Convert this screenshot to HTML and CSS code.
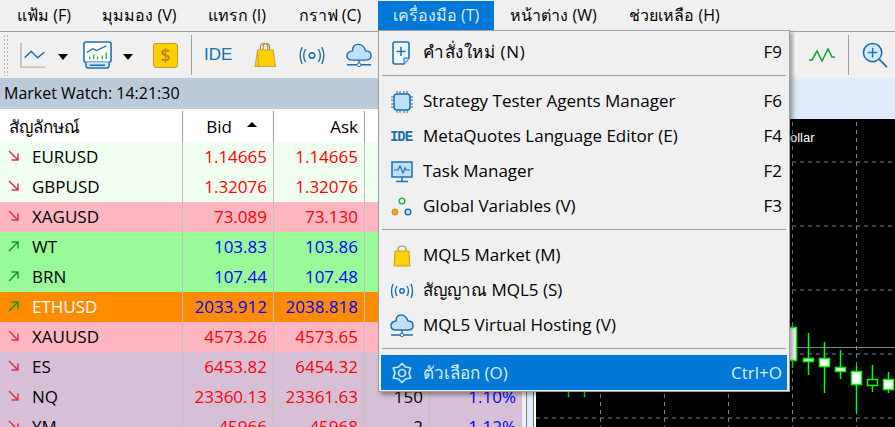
FILE: index.html
```html
<!DOCTYPE html>
<html lang="th">
<head>
<meta charset="utf-8">
<title>MetaTrader</title>
<link rel="stylesheet" href="styles.css">
</head>
<body>
<div class="app">
  <nav class="menubar">
    <span class="mi m1">แฟ้ม (F)</span>
    <span class="mi m2">มุมมอง (V)</span>
    <span class="mi m3">แทรก (I)</span>
    <span class="mi m4">กราฟ (C)</span>
    <span class="mi m5 open">เครื่องมือ (T)</span>
    <span class="mi m6">หน้าต่าง (W)</span>
    <span class="mi m7">ช่วยเหลือ (H)</span>
  </nav>
  <div class="toolbar">
    <div class="grip"></div>
    <svg class="ic i-line" width="26" height="26" viewBox="0 0 28 28"><path d="M1 1V27H27" fill="none" stroke="#b4b4b4" stroke-width="1.5"/><path d="M5 17L12 10L19 17L26 11" fill="none" stroke="#1c6fb3" stroke-width="1.6"/></svg>
    <span class="caret c1"></span>
    <svg class="ic i-chart" width="29" height="29" viewBox="0 0 30 30"><rect x="1" y="1" width="28" height="21" rx="2" fill="#fff" stroke="#1c6fb3" stroke-width="1.6"/><path d="M4 12L10 8L14 10L24 5" fill="none" stroke="#1c6fb3" stroke-width="1.3"/><path d="M7 19V16M11 19V14M15 19V16M20 19V15M24 19V12" stroke="#35b44a" stroke-width="1.5"/><path d="M3 22V25Q3 28 6 28H24Q27 28 27 25V22M7 25H23" fill="#d6e9f8" stroke="#1c6fb3" stroke-width="1.5"/></svg>
    <span class="caret c2"></span>
    <div class="dollar">$</div>
    <span class="vsep s1"></span>
    <span class="ide">IDE</span>
    <svg class="ic i-bag" width="22" height="26" viewBox="0 0 24 27"><path d="M7 9V5Q7 1 10.500 1H12Q15 1 15 5V9M10 9V5Q10 1 13.500 1Q17 1 17 5V9" fill="none" stroke="#b8892f" stroke-width="1.2"/><path d="M4 8H21L23.500 26H1Z" fill="#ffd000" stroke="#c89a38"/><path d="M4 8L5 26" stroke="#c89a38"/></svg>
    <svg class="ic i-sig" width="26" height="19" viewBox="0 0 28 20"><circle cx="14" cy="10" r="3" fill="none" stroke="#1c6fb3" stroke-width="1.6"/><path d="M7 3Q3 10 7 17M21 3Q25 10 21 17M3.500 1Q-1 10 3.500 19M24.500 1Q29 10 24.500 19" fill="none" stroke="#1c6fb3" stroke-width="1.5"/></svg>
    <svg class="ic i-cloud" width="26" height="25" viewBox="0 0 28 26"><path d="M7 18H21Q27 18 27 13Q27 8 21 8Q19 1 13 1Q7 1 7 8Q1 9 1 13Q1 18 7 18Z" fill="#bfe0fb" stroke="#1c6fb3" stroke-width="1.5"/><path d="M1 23H27M14 18V23" stroke="#1c6fb3" stroke-width="1.5"/><circle cx="14" cy="23" r="2" fill="#fff" stroke="#1c6fb3"/></svg>
    <div class="tb-right">
      <div class="pressed"></div>
      <svg class="ic i-wave" width="26" height="14" viewBox="0 0 26 14"><path d="M0 12H3L8 3L13 13L19 1L23 9H26" fill="none" stroke="#1aa83c" stroke-width="1.6"/></svg>
      <span class="vsep s2"></span>
      <svg class="ic i-zoom" width="26" height="26" viewBox="0 0 27 27"><circle cx="11" cy="11" r="9.500" fill="#d6ebfb" stroke="#1c6fb3" stroke-width="1.6"/><path d="M11 6V16M6 11H16" stroke="#1c6fb3" stroke-width="1.5"/><path d="M18 18L26 26" stroke="#1c6fb3" stroke-width="1.8"/></svg>
    </div>
  </div>
  <div class="workspace">
    <section class="watch">
      <div class="watch-title">Market Watch: 14:21:30</div>
      <div class="thead">
        <div class="th sym">สัญลักษณ์</div>
        <div class="th num bid">Bid <span class="sort"></span></div>
        <div class="th num">Ask</div>
        <div class="th"></div>
        <div class="th"></div>
      </div>
      <div class="row honey"><svg class="ar dn" viewBox="0 0 12 12"><path d="M1 1L10 10M10 3.500V10H3.500"/></svg><div class="c sym">EURUSD</div><div class="c num red">1.14665</div><div class="c num red">1.14665</div><div class="c num"></div><div class="c num"></div></div>
      <div class="row honey"><svg class="ar dn" viewBox="0 0 12 12"><path d="M1 1L10 10M10 3.500V10H3.500"/></svg><div class="c sym">GBPUSD</div><div class="c num red">1.32076</div><div class="c num red">1.32076</div><div class="c num"></div><div class="c num"></div></div>
      <div class="row pink"><svg class="ar dn" viewBox="0 0 12 12"><path d="M1 1L10 10M10 3.500V10H3.500"/></svg><div class="c sym">XAGUSD</div><div class="c num red">73.089</div><div class="c num red">73.130</div><div class="c num"></div><div class="c num"></div></div>
      <div class="row pale"><svg class="ar up" viewBox="0 0 12 12"><path d="M1 11L10 2M3.500 2H10V8.500"/></svg><div class="c sym">WT</div><div class="c num blue">103.83</div><div class="c num blue">103.86</div><div class="c num"></div><div class="c num"></div></div>
      <div class="row pale"><svg class="ar up" viewBox="0 0 12 12"><path d="M1 11L10 2M3.500 2H10V8.500"/></svg><div class="c sym">BRN</div><div class="c num blue">107.44</div><div class="c num blue">107.48</div><div class="c num"></div><div class="c num"></div></div>
      <div class="row orange"><svg class="ar up" viewBox="0 0 12 12"><path d="M1 11L10 2M3.500 2H10V8.500"/></svg><div class="c sym">ETHUSD</div><div class="c num blue">2033.912</div><div class="c num blue">2038.818</div><div class="c num"></div><div class="c num"></div></div>
      <div class="row pink"><svg class="ar dn" viewBox="0 0 12 12"><path d="M1 1L10 10M10 3.500V10H3.500"/></svg><div class="c sym">XAUUSD</div><div class="c num red">4573.26</div><div class="c num red">4573.65</div><div class="c num"></div><div class="c num"></div></div>
      <div class="row thistle"><svg class="ar dn" viewBox="0 0 12 12"><path d="M1 1L10 10M10 3.500V10H3.500"/></svg><div class="c sym">ES</div><div class="c num red">6453.82</div><div class="c num red">6454.32</div><div class="c num"></div><div class="c num"></div></div>
      <div class="row thistle"><svg class="ar dn" viewBox="0 0 12 12"><path d="M1 1L10 10M10 3.500V10H3.500"/></svg><div class="c sym">NQ</div><div class="c num red">23360.13</div><div class="c num red">23361.63</div><div class="c num">150</div><div class="c num blue">1.10%</div></div>
      <div class="row thistle"><svg class="ar dn" viewBox="0 0 12 12"><path d="M1 1L10 10M10 3.500V10H3.500"/></svg><div class="c sym">YM</div><div class="c num red">45966</div><div class="c num red">45968</div><div class="c num">2</div><div class="c num blue">1.12%</div></div>
    </section>
    <section class="chartpane">
      <div class="chartwrap">
        <div class="chartframe">
          <div class="chart">
            <span class="chart-title">ollar</span>
            <svg class="plot" width="359" height="308" viewBox="536 119 359 308">
              <g class="grid">
                <path d="M536 162H895M536 226H895M536 290H895M536 354H895M536 418H895M600.500 122V427M664.500 122V427M728.500 122V427M792.500 122V427M856.500 122V427"/>
              </g>
              <path d="M536 347.500H895" stroke="#778899"/>
              <g class="cdl">
                <path d="M792.500 324V368M808.500 333V375M824.500 342V393M840.500 350V379M856.500 366V413M872.500 365V392M888.500 372V393M568.500 392V397M584.500 392V397"/>
                <rect x="781.500" y="327.500" width="15" height="33" fill="#fff"/>
                <rect x="803.500" y="358.500" width="10" height="3" fill="#fff"/>
                <rect x="819.500" y="358.500" width="10" height="8" fill="#fff"/>
                <rect x="835.500" y="367.500" width="10" height="4" fill="#fff"/>
                <rect x="851.500" y="371.500" width="10" height="13" fill="#fff"/>
                <rect x="867.500" y="379.500" width="10" height="6" fill="#000"/>
                <rect x="883.500" y="379.500" width="10" height="10" fill="#fff"/>
              </g>
            </svg>
          </div>
        </div>
      </div>
    </section>
  </div>

  <div class="menu">
    <div class="item"><svg class="mic" width="20" height="24" viewBox="0 0 20 24"><path d="M3 1H15Q17 1 17 3V17L12 23H3Q1 23 1 21V3Q1 1 3 1Z" fill="#eef6fc" stroke="#1c6fb3" stroke-width="1.6"/><path d="M12 23V17H17" fill="#bfe0fb" stroke="#1c6fb3"/><path d="M9 6V15M4.500 10.500H13.500" stroke="#1c6fb3" stroke-width="1.5"/></svg><span class="lbl wide">คำสั่งใหม่ (N)</span><span class="key">F9</span></div>
    <div class="sep"></div>
    <div class="item"><svg class="mic" width="24" height="24" viewBox="0 0 24 24"><rect x="4" y="4" width="16" height="16" rx="3" fill="#bfe0fb" stroke="#1c6fb3" stroke-width="1.5"/><path d="M7 1V4M10 1V4M14 1V4M17 1V4M7 20V23M10 20V23M14 20V23M17 20V23M1 7H4M1 10H4M1 14H4M1 17H4M20 7H23M20 10H23M20 14H23M20 17H23" stroke="#1c6fb3"/></svg><span class="lbl">Strategy Tester Agents Manager</span><span class="key">F6</span></div>
    <div class="item"><span class="mide">IDE</span><span class="lbl">MetaQuotes Language Editor (E)</span><span class="key">F4</span></div>
    <div class="item"><svg class="mic" width="22" height="22" viewBox="0 0 22 22"><rect x="1" y="1" width="20" height="15" fill="#bfe0fb" stroke="#1c6fb3" stroke-width="1.5"/><path d="M3 9H7L9 5L12 12L14 7L15 9H19" fill="none" stroke="#1c6fb3" stroke-width="1.2"/><path d="M11 16V20M5 20.500H17" stroke="#1c6fb3" stroke-width="1.5"/></svg><span class="lbl">Task Manager</span><span class="key">F2</span></div>
    <div class="item"><svg class="mic" width="22" height="20" viewBox="0 0 22 20"><circle cx="11" cy="4" r="2.800" fill="#fff" stroke="#22b14c" stroke-width="1.5"/><circle cx="4" cy="15" r="3" fill="#f0a818" stroke="#c88a10"/><circle cx="17" cy="15" r="2.800" fill="#d6ebfb" stroke="#1c6fb3" stroke-width="1.5"/></svg><span class="lbl">Global Variables (V)</span><span class="key">F3</span></div>
    <div class="sep"></div>
    <div class="item"><svg class="mic" width="18" height="22" viewBox="0 0 18 22"><path d="M5 7V4Q5 1 9 1Q13 1 13 4V7" fill="none" stroke="#b8892f" stroke-width="1.2"/><path d="M2 6H16L17 21H1Z" fill="#ffd000" stroke="#c89a38"/></svg><span class="lbl">MQL5 Market (M)</span><span class="key"></span></div>
    <div class="item"><svg class="mic" width="24" height="16" viewBox="0 0 24 16"><circle cx="12" cy="8" r="2.200" fill="none" stroke="#1c6fb3" stroke-width="1.500"/><path d="M7 3Q4 8 7 13M17 3Q20 8 17 13M3 1Q0 8 3 15M21 1Q24 8 21 15" fill="none" stroke="#1c6fb3" stroke-width="1.400"/></svg><span class="lbl">สัญญาณ MQL5 (S)</span><span class="key"></span></div>
    <div class="item"><svg class="mic" width="24" height="24" viewBox="0 0 24 24"><path d="M6 16H18Q23 16 23 11.500Q23 7 18 7Q16 1 11 1Q6 1 6 7Q1 8 1 11.500Q1 16 6 16Z" fill="#bfe0fb" stroke="#1c6fb3" stroke-width="1.500"/><path d="M1 21H23M12 16V21" stroke="#1c6fb3" stroke-width="1.500"/><circle cx="12" cy="21" r="1.800" fill="#fff" stroke="#1c6fb3"/></svg><span class="lbl">MQL5 Virtual Hosting (V)</span><span class="key"></span></div>
    <div class="sep short"></div>
    <div class="item sel"><svg class="mic" width="22" height="22" viewBox="0 0 22 22"><path d="M11 1.500L14.500 5L19.700 6L18 11L19.700 16L14.500 17L11 20.500L7.500 17L2.300 16L4 11L2.300 6L7.500 5Z" fill="none" stroke="#cfe6f8" stroke-width="1.700" stroke-linejoin="round"/><circle cx="11" cy="11" r="3.500" fill="none" stroke="#cfe6f8" stroke-width="1.700"/></svg><span class="lbl">ตัวเลือก (O)</span><span class="key">Ctrl+O</span></div>
  </div>
</div>
</body>
</html>
```

FILE: styles.css
```css
* { box-sizing: border-box; }
html, body { margin: 0; padding: 0; }
body {
  width: 895px;
  height: 427px;
  overflow: hidden;
  background: #f0f0f0;
  font-family: "Open Sans", "Noto Sans", "Noto Sans CJK SC", "DejaVu Sans", sans-serif;
  font-size: 17px;
  color: #000;
}
.app { position: relative; width: 895px; height: 427px; overflow: hidden; }

.menubar {
  display: flex;
  height: 32px;
  padding: 1px 0 0 1px;
  background: #f0f0f0;
  border-bottom: 1px solid #a0a0a0;
  font-size: 16px;
}
.mi { display: flex; align-items: center; height: 29px; justify-content: center; white-space: nowrap; flex: none; }
.m1 { width: 86px; }
.m2 { width: 105px; }
.m3 { width: 90px; }
.m4 { width: 96px; }
.m5 { width: 116px; }
.m6 { width: 119px; }
.m7 { width: 123px; }
.mi.open { background: #0078d7; color: #dbeefb; }

.toolbar {
  display: flex;
  align-items: center;
  height: 46px;
  background: #f0f0f0;
  padding-left: 3px;
}
.grip {
  width: 5px;
  height: 42px;
  background-image: radial-gradient(#b0b0b0 1px, transparent 1px);
  background-size: 3px 4px;
}
.ic { flex: none; display: block; }
.i-line { margin-left: 12px; }
.caret { width: 0; height: 0; border-left: 5.500px solid transparent; border-right: 5.500px solid transparent; border-top: 6px solid #000; margin-top: 4px; flex: none; }
.c1 { margin-left: 12px; }
.i-chart { margin-left: 15px; }
.c2 { margin-left: 11px; }
.dollar {
  margin-left: 20px;
  width: 25px;
  height: 25px;
  flex: none;
  background: #ffd000;
  border: 1px solid #c8982e;
  border-radius: 3px;
  color: #bb8a10;
  font-size: 18px;
  font-weight: 600;
  line-height: 23px;
  text-align: center;
}
.vsep { width: 1px; height: 40px; background: #a0a0a0; flex: none; }
.s1 { margin-left: 13px; }
.ide { margin-left: 12px; color: #1c6fb3; font-size: 17px; width: 28px; flex: none; font-family: "Liberation Sans", sans-serif; }
.i-bag { margin-left: 22px; }
.i-sig { margin-left: 23px; }
.i-cloud { margin-left: 21px; }
.tb-right { margin-left: auto; display: flex; align-items: center; }
.pressed { width: 30px; height: 40px; background: #f9f9f9; margin-right: 12px; }
.i-wave { margin-right: 13px; }
.i-zoom { margin: 0 7px 0 13px; }

.workspace { display: flex; height: 349px; }
.watch { width: 522px; background: #fff; flex: none; }
.watch-title {
  height: 31px;
  background: #bccbd9;
  padding-left: 4px;
  line-height: 30px;
  font-size: 16px;
  margin-bottom: 2px;
}
.thead, .row {
  display: grid;
  grid-template-columns: 183px 91px 91px 65px 92px;
  position: relative;
}
.thead { height: 31px; background: #fff; }
.th { border-right: 1px solid #a0a0a0; line-height: 31px; padding: 0 6px; }
.th:last-child { border-right: 0; }
.th.sym { padding-left: 9px; }
.th.num { text-align: right; }
.th.bid { padding-right: 41px; }
.sort { position: absolute; left: 247px; top: 11px; width: 0; height: 0; border-left: 5px solid transparent; border-right: 5px solid transparent; border-bottom: 5px solid #000; }
.row { height: 30px; line-height: 30px; }
.c { padding: 0 6px; border-right: 1px solid #c0c0c0; border-bottom: 1px solid #c0c0c0; }
.c:last-child { border-right: 0; }
.c.sym { padding-left: 32px; }
.c.num { text-align: right; }
.red { color: #ff0000; }
.blue { color: #0000ff; }
.honey { background: #f0fff0; }
.pink { background: #ffb6c1; }
.pale { background: #98fb98; }
.orange { background: #ff8c00; }
.orange .sym { color: #fff; }
.thistle { background: #d8bfd8; }
.ar { position: absolute; left: 8px; top: 8px; width: 12px; height: 12px; fill: none; stroke-width: 1.500; }
.ar.dn { stroke: #dc3545; }
.ar.up { stroke: #109a28; }

.chartpane { flex: 1; display: flex; padding-left: 4px; background: #f0f0f0; }
.chartwrap { flex: 1; display: flex; flex-direction: column; border-left: 1px solid #808080; padding: 41px 0 0 6px; background: #deedf9; }
.chartframe { flex: 1; display: flex; border-left: 1px solid #707070; }
.chart { position: relative; flex: 1; border-left: 2px solid #fff; background: #000; overflow: hidden; }
.chart-title { position: absolute; left: 254px; top: 11px; color: #fff; font: 13px "Liberation Sans", sans-serif; }
.plot { display: block; }
.grid path { fill: none; stroke: #778899; stroke-dasharray: 4 4; }
.cdl { stroke: #00ff00; stroke-width: 1.500; fill: none; }

.menu {
  position: absolute;
  left: 378px;
  top: 30px;
  width: 412px;
  height: 362px;
  background: #f0f0f0;
  border: 1px solid #a0a0a0;
  padding: 4px 2px 2px;
  box-shadow: 3px 3px 4px rgba(0,0,0,.35);
}
.item { position: relative; display: flex; align-items: center; height: 35px; padding: 0 5px 2px 42px; }
.lbl { flex: 1; white-space: nowrap; }
.lbl.wide { letter-spacing: .6px; }
.mic { position: absolute; left: 21px; top: 50%; transform: translate(-50%, -50%); }
.mide { position: absolute; left: 20px; top: 50%; transform: translate(-50%, -50%); color: #1c6fb3; font: 700 14px "Liberation Mono", monospace; letter-spacing: -1px; }
.sep { height: 14px; position: relative; }
.sep::after { content: ""; position: absolute; left: 1px; right: 1px; top: 5px; height: 1px; background: #a0a0a0; }
.sep.short { height: 12px; }
.item.sel { background: #0078d7; color: #dbeefb; padding-bottom: 0; }
```
